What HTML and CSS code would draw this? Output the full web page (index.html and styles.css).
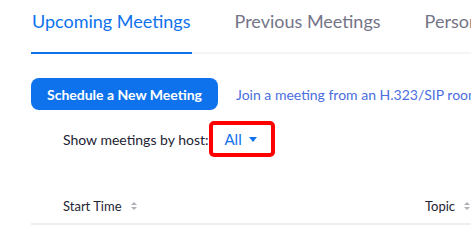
FILE: index.html
```html
<!DOCTYPE html>
<html lang="en">
<head>
  <meta charset="UTF-8">
  <title>Meetings</title>
  <link rel="stylesheet" href="styles.css">
</head>
<body>
  <div class="page">
    <div class="tabs">
      <a class="tab active">Upcoming Meetings</a>
      <a class="tab">Previous Meetings</a>
      <a class="tab">Personal Meeting Room</a>
    </div>
    <div class="actions">
      <button class="btn-primary">Schedule a New Meeting</button>
      <a class="link">Join a meeting from an H.323/SIP room system</a>
    </div>
    <div class="filter">
      <span class="filter-label">Show meetings by host:</span>
      <span class="host-select">
        All
        <svg class="caret" viewBox="0 0 8 5"><path d="M0 0h8L4 5z" fill="currentColor"/></svg>
      </span>
    </div>
    <div class="table-head">
      <div class="col col-time">Start Time <span class="sort"><span class="up"></span><span class="down"></span></span></div>
      <div class="col col-topic">Topic <span class="sort"><span class="up"></span><span class="down"></span></span></div>
    </div>
  </div>
</body>
</html>
```

FILE: styles.css
```css
body {
  margin: 0;
  font-family: Lato, 'Open Sans', sans-serif;
  background: #fff;
  color: #232333;
  overflow: hidden;
}
.page {
  padding-left: 31px;
  width: 700px;
}
.tabs {
  display: flex;
  border-bottom: 2px solid #f5f5f7;
  height: 52px;
}
.tab {
  font-size: 18px;
  color: #747487;
  padding: 10px 1px 0;
  margin-right: 42px;
  white-space: nowrap;
  box-sizing: border-box;
  height: 54px;
}
.tab.active {
  color: #0e72ed;
  border-bottom: 2px solid #0e72ed;
}
.actions {
  display: flex;
  align-items: center;
  margin-top: 24px;
}
.btn-primary {
  background: #0e72ed;
  color: #fff;
  border: none;
  border-radius: 8px;
  height: 32px;
  width: 187px;
  font-family: inherit;
  font-size: 14px;
  font-weight: bold;
  padding: 0;
}
.link {
  color: #4a6ee0;
  font-size: 14px;
  margin-left: 18px;
  white-space: nowrap;
}
.filter {
  display: flex;
  align-items: center;
  margin-top: 11px;
  padding-left: 32px;
  font-size: 14px;
}
.filter-label {
  color: #232333;
}
.host-select {
  display: flex;
  align-items: center;
  gap: 7px;
  color: #0e72ed;
  font-size: 15px;
  margin-left: 1px;
  border: 4px solid #f00;
  border-radius: 5px;
  height: 36px;
  width: 66px;
  box-sizing: border-box;
  padding-left: 11px;
}
.caret {
  width: 8px;
  height: 5px;
}
.table-head {
  display: flex;
  margin-top: 32px;
  height: 34px;
  border-bottom: 2px solid #eeeeef;
  font-size: 13px;
  color: #232333;
  align-items: center;
}
.col {
  display: flex;
  align-items: center;
  gap: 9px;
}
.col-time {
  padding-left: 32px;
  width: 362px;
}
.sort {
  display: flex;
  flex-direction: column;
  gap: 2px;
}
.sort .up,
.sort .down {
  width: 0;
  height: 0;
  border-left: 3px solid transparent;
  border-right: 3px solid transparent;
}
.sort .up {
  border-bottom: 3px solid #b0b0b8;
}
.sort .down {
  border-top: 3px solid #b0b0b8;
}
```
